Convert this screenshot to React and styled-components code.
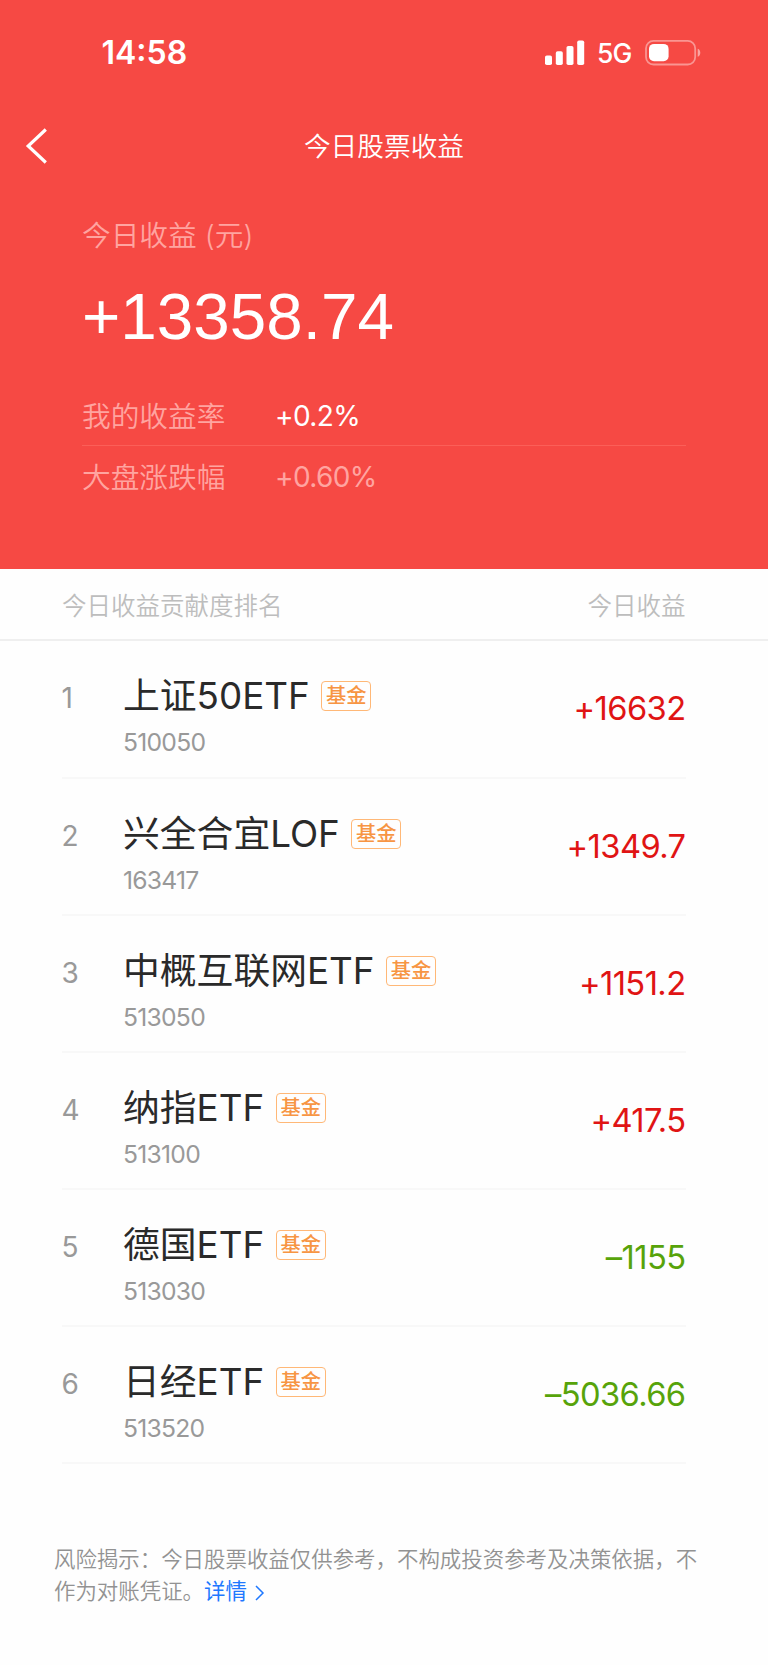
import React from 'react';
import styled, { createGlobalStyle } from 'styled-components';

const GlobalStyle = createGlobalStyle`
  * {
    box-sizing: border-box;
  }
  body {
    margin: 0;
    background: #fefefe;
    font-family: Inter, 'Noto Sans CJK SC', sans-serif;
    font-weight: 350;
  }
`;

const Screen = styled.main`
  width: 768px;
  height: 1665px;
  display: flex;
  flex-direction: column;
  background: #fefefe;
  overflow: hidden;
`;

const Hero = styled.header`
  height: 568.6px;
  flex: none;
  background: #f64944;
  color: #fff;
`;
const StatusBar = styled.div`
  height: 106px;
  padding: 0 67px 0 101.5px;
  display: flex;
  align-items: center;
  justify-content: space-between;
`;
const Clock = styled.time`
  font-size: 32px;
  font-weight: 600;
  line-height: 40px;
`;
const Signals = styled.div`
  display: flex;
  align-items: center;
`;
const Network = styled.span`
  margin: 0 13.5px 0 12px;
  font-size: 26.5px;
  font-weight: 450;
  line-height: 40px;
  letter-spacing: -0.8px;
`;

const NavBar = styled.nav`
  height: 79px;
  padding: 0 24px;
  display: grid;
  grid-template-columns: 40px 1fr 40px;
  align-items: center;
`;
const BackButton = styled.button`
  display: flex;
  padding: 0;
  border: 0;
  background: none;
  color: inherit;
`;
const Title = styled.h1`
  margin: 0;
  text-align: center;
  font-size: 26.7px;
  font-weight: 350;
  line-height: 40px;
`;

const Summary = styled.section`
  padding: 29px 82px 0;
`;
const Caption = styled.p`
  margin: 0;
  font-size: 28.7px;
  line-height: 44px;
  color: #ffa4a0;
`;
const Total = styled.p`
  margin: 21px 0 29px;
  font-family: 'Liberation Sans', sans-serif;
  font-size: 65.6px;
  line-height: 76px;
`;
const Rate = styled.div`
  height: ${({ $muted }) => ($muted ? '60px' : '61.5px')};
  display: flex;
  align-items: center;
  color: ${({ $muted }) => ($muted ? '#ffa4a0' : '#fff')};
  border-bottom: ${({ $muted }) => ($muted ? '0' : '1px solid #fb5f58')};
`;
const RateLabel = styled.span`
  width: 193px;
  font-size: 28.7px;
  color: #ffa4a0;
`;
const RateValue = styled.span`
  padding-top: 3px;
  font-size: 28px;
  font-weight: 400;
  letter-spacing: -0.6px;
`;

const ListHeader = styled.div`
  height: 72.9px;
  flex: none;
  padding: 0 82.5px 0 62px;
  display: flex;
  align-items: center;
  justify-content: space-between;
  font-size: 24.5px;
  color: #bdbdbd;
  border-bottom: 2px solid #efefef;
`;
const List = styled.ol`
  margin: 0 82.5px 0 61.5px;
  padding: 0;
  list-style: none;
`;
const Item = styled.li`
  height: 137.1px;
  display: grid;
  grid-template-columns: 61.5px 1fr auto;
  border-bottom: 2px solid #f8f8f8;
`;
const Rank = styled.span`
  padding-top: 37px;
  font-size: 28px;
  font-weight: 400;
  line-height: 40px;
  color: #999;
`;
const Fund = styled.div`
  padding-top: 29px;
`;
const NameLine = styled.div`
  display: flex;
  align-items: center;
  height: 52px;
`;
const Name = styled.span`
  font-size: 36.8px;
  font-weight: 400;
  line-height: 52px;
  color: #2a2a2a;
`;
const Tag = styled.span`
  width: 50px;
  height: 30px;
  margin-left: 11.5px;
  display: flex;
  align-items: center;
  justify-content: center;
  border: 1.5px solid #ffb877;
  border-radius: 4px;
  font-size: 20.3px;
  font-weight: 500;
  line-height: 28px;
  color: #f79543;
`;
const Code = styled.div`
  margin-top: 4px;
  font-size: 24.7px;
  font-weight: 400;
  line-height: 32px;
  letter-spacing: -0.75px;
  color: #999;
`;
const Gain = styled.span`
  padding-top: 46px;
  font-size: 32.7px;
  font-weight: 400;
  line-height: 42px;
  letter-spacing: -0.6px;
  color: ${({ $loss }) => ($loss ? '#57a30a' : '#e01414')};
`;

const Disclaimer = styled.p`
  margin: 79px 60px 0 54px;
  font-size: 21.45px;
  line-height: 32px;
  color: #929292;
`;
const DetailLink = styled.a`
  color: #1f78ff;
  font-weight: 400;
  svg {
    margin-left: 8px;
    vertical-align: -2px;
  }
`;

const funds = [
  { name: '上证50ETF', code: '510050', gain: '+16632' },
  { name: '兴全合宜LOF', code: '163417', gain: '+1349.7' },
  { name: '中概互联网ETF', code: '513050', gain: '+1151.2' },
  { name: '纳指ETF', code: '513100', gain: '+417.5' },
  { name: '德国ETF', code: '513030', gain: '–1155' },
  { name: '日经ETF', code: '513520', gain: '–5036.66' },
];

const SignalIcon = () => (
  <svg width="40" height="26" viewBox="0 0 40 26" fill="#fff">
    <rect x="0" y="15.5" width="7" height="9.5" rx="1.8" />
    <rect x="10.8" y="11.3" width="7" height="13.7" rx="1.8" />
    <rect x="21.5" y="6" width="7" height="19" rx="1.8" />
    <rect x="32.2" y="0.5" width="7" height="24.5" rx="1.8" />
  </svg>
);

const BatteryIcon = () => (
  <svg width="56" height="26" viewBox="0 0 56 26" fill="none">
    <rect x="1" y="0.9" width="49.2" height="23.6" rx="7.5" stroke="#fff" strokeOpacity="0.42" strokeWidth="1.8" />
    <rect x="4" y="3.9" width="19.6" height="17.4" rx="5" fill="#fff" />
    <path d="M52.7 8.7v8c1.7-.6 2.6-2.1 2.6-4s-.9-3.4-2.6-4z" fill="#fff" fillOpacity="0.5" />
  </svg>
);

const BackIcon = () => (
  <svg width="24" height="36" viewBox="0 0 24 36" fill="none">
    <path d="M21.8 1.5L4.2 18L21.8 34.5" stroke="#fff" strokeWidth="3.2" />
  </svg>
);

const ArrowIcon = () => (
  <svg width="10" height="16" viewBox="0 0 10 16" fill="none">
    <path d="M1 1L8 8L1 15" stroke="#1f78ff" strokeWidth="1.5" />
  </svg>
);

export default function App() {
  return (
    <Screen>
      <GlobalStyle />
      <Hero>
        <StatusBar>
          <Clock>14:58</Clock>
          <Signals>
            <SignalIcon />
            <Network>5G</Network>
            <BatteryIcon />
          </Signals>
        </StatusBar>
        <NavBar>
          <BackButton aria-label="返回">
            <BackIcon />
          </BackButton>
          <Title>今日股票收益</Title>
        </NavBar>
        <Summary>
          <Caption>今日收益 (元)</Caption>
          <Total>+13358.74</Total>
          <Rate>
            <RateLabel>我的收益率</RateLabel>
            <RateValue>+0.2%</RateValue>
          </Rate>
          <Rate $muted>
            <RateLabel>大盘涨跌幅</RateLabel>
            <RateValue>+0.60%</RateValue>
          </Rate>
        </Summary>
      </Hero>
      <ListHeader>
        <span>今日收益贡献度排名</span>
        <span>今日收益</span>
      </ListHeader>
      <List>
        {funds.map((fund, index) => (
          <Item key={fund.code}>
            <Rank>{index + 1}</Rank>
            <Fund>
              <NameLine>
                <Name>{fund.name}</Name>
                <Tag>基金</Tag>
              </NameLine>
              <Code>{fund.code}</Code>
            </Fund>
            <Gain $loss={fund.gain.startsWith('–')}>{fund.gain}</Gain>
          </Item>
        ))}
      </List>
      <Disclaimer>
        风险揭示：今日股票收益仅供参考，不构成投资参考及决策依据，不作为对账凭证。
        <DetailLink>
          详情
          <ArrowIcon />
        </DetailLink>
      </Disclaimer>
    </Screen>
  );
}
